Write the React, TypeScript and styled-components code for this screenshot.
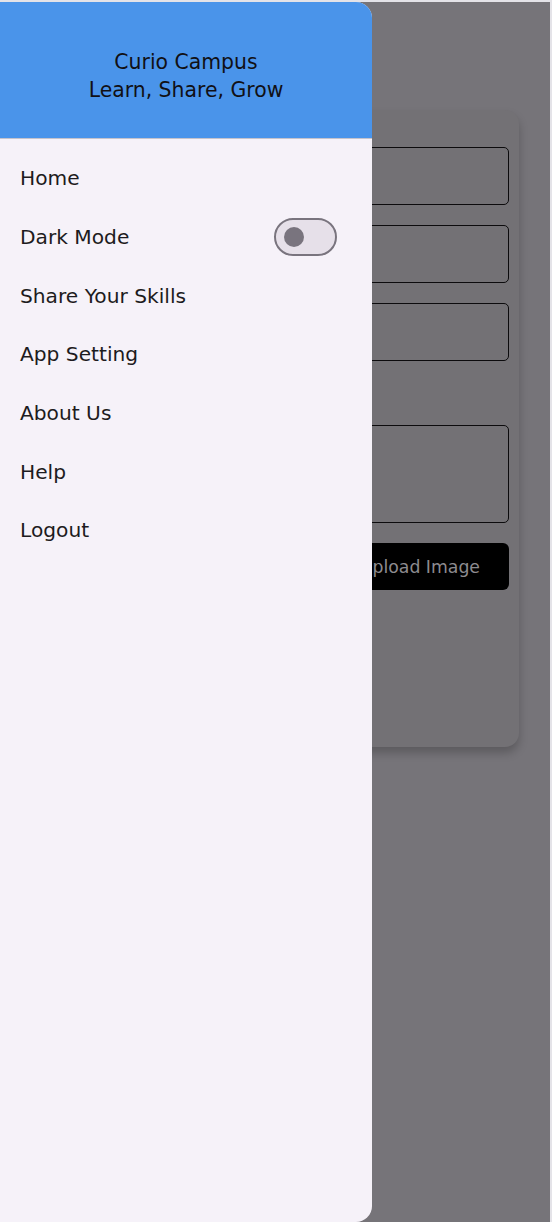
import React from "react";
import styled, { createGlobalStyle } from "styled-components";

const Global = createGlobalStyle`
  html, body { margin: 0; padding: 0; }
  body {
    background: #e4e3e8;
    font-family: "DejaVu Sans", "Noto Sans", sans-serif;
    overflow: hidden;
  }
  #root { height: 1222px; }
`;

const Screen = styled.div`
  position: relative;
  margin: 2px 2px 0 0;
  height: 1220px;
  background: #767479;
  overflow: hidden;
`;

const Page = styled.div`
  padding: 108px 31px 0 35px;
`;

const Card = styled.div`
  background: #737175;
  border-radius: 14px;
  box-shadow: 0 6px 10px rgba(0, 0, 0, 0.22);
  height: 637px;
  box-sizing: border-box;
  padding: 37px 10px 0 10px;
  display: flex;
  flex-direction: column;
`;

const Field = styled.div<{ $h: number; $mt: number }>`
  height: ${(p) => p.$h}px;
  margin-top: ${(p) => p.$mt}px;
  border: 1.5px solid #0c0b0d;
  border-radius: 5px;
  box-sizing: border-box;
`;

const UploadButton = styled.div`
  margin-top: 20px;
  height: 47px;
  background: #000;
  border-radius: 6px;
  display: flex;
  align-items: center;
  justify-content: flex-end;
  padding-right: 29px;
  color: #8d8b8f;
  font-size: 17.3px;
`;

const Scrim = styled.div`
  position: absolute;
  inset: 0;
`;

const Drawer = styled.aside`
  position: absolute;
  left: 0;
  top: 0;
  width: 372px;
  height: 1220px;
  background: #f6f2f9;
  border-radius: 0 16px 16px 0;
  overflow: hidden;
  display: flex;
  flex-direction: column;
`;

const Header = styled.header`
  height: 137px;
  background: #4a94ea;
  border-bottom: 1px solid #c5c3cc;
  display: flex;
  flex-direction: column;
  align-items: center;
  justify-content: center;
  padding-top: 11px;
  box-sizing: border-box;
  color: #111014;
  font-size: 20.4px;
  line-height: 28px;
`;

const Menu = styled.nav`
  padding-top: 10px;
  display: flex;
  flex-direction: column;
`;

const Item = styled.div`
  height: 58.67px;
  padding: 0 35px 0 20px;
  display: flex;
  align-items: center;
  justify-content: space-between;
  color: #1d1b20;
  font-size: 20.2px;
`;

const Switch = styled.div`
  width: 63px;
  height: 38px;
  box-sizing: border-box;
  border: 2px solid #79747e;
  border-radius: 19px;
  background: #e6e0e9;
  display: flex;
  align-items: center;
  padding-left: 8px;
`;

const Thumb = styled.div`
  width: 20px;
  height: 20px;
  border-radius: 50%;
  background: #79747e;
`;

const items = ["Home", "Dark Mode", "Share Your Skills", "App Setting", "About Us", "Help", "Logout"];

export default function App() {
  return (
    <>
      <Global />
      <Screen>
        <Page>
          <Card>
            <Field $h={58} $mt={0} />
            <Field $h={58} $mt={20} />
            <Field $h={58} $mt={20} />
            <Field $h={98} $mt={64} />
            <UploadButton>Upload Image</UploadButton>
          </Card>
        </Page>
        <Scrim />
        <Drawer>
          <Header>
            <div>Curio Campus</div>
            <div>Learn, Share, Grow</div>
          </Header>
          <Menu>
            {items.map((t) => (
              <Item key={t}>
                <span>{t}</span>
                {t === "Dark Mode" && (
                  <Switch>
                    <Thumb />
                  </Switch>
                )}
              </Item>
            ))}
          </Menu>
        </Drawer>
      </Screen>
    </>
  );
}
